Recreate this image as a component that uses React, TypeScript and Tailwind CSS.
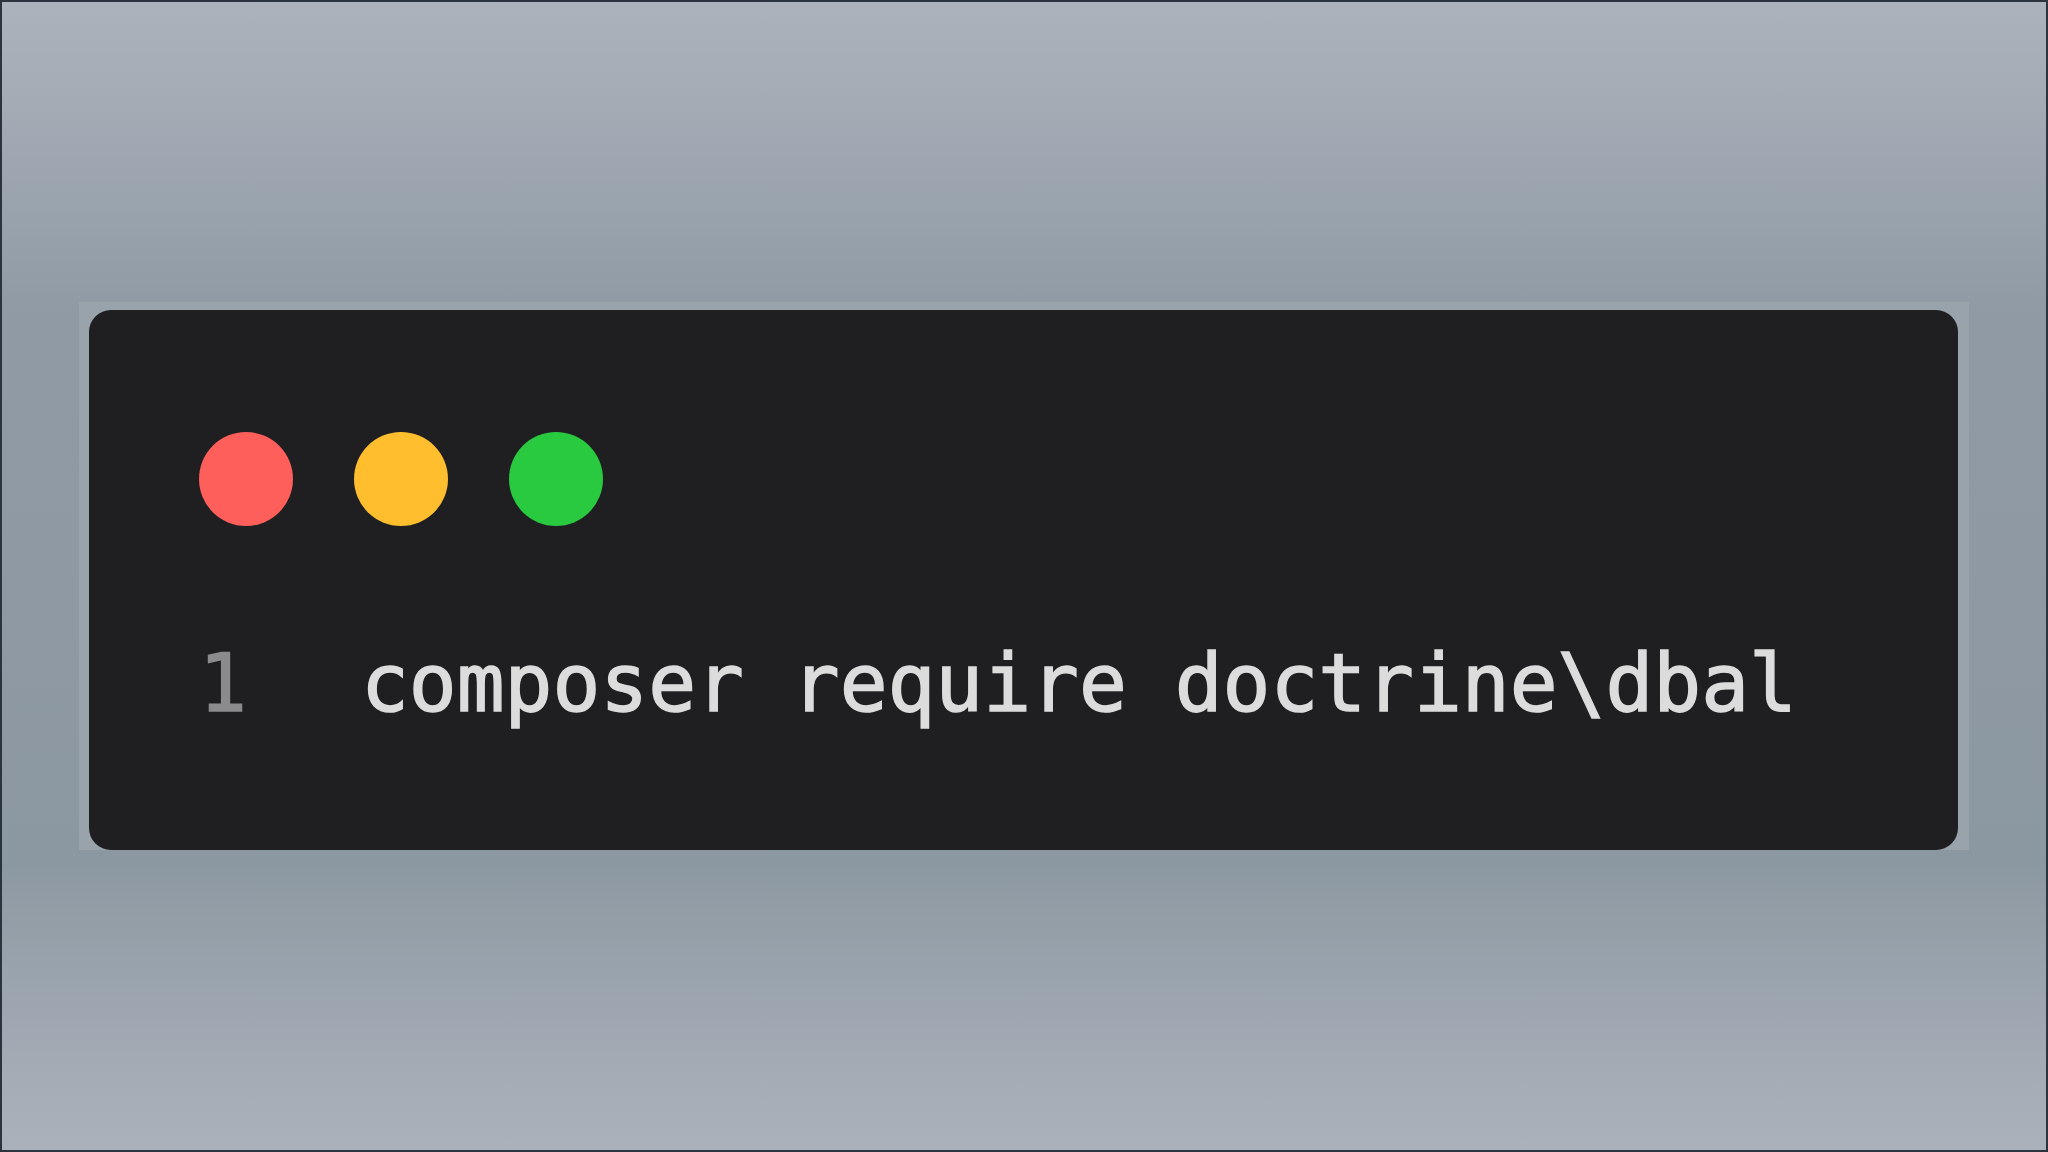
const mono = { fontFamily: '"DejaVu Sans Mono", "Liberation Mono", monospace' }

export default function App() {
  return (
    <div className="w-[2048px] h-[1152px] border-2 border-[#2a333e] bg-[linear-gradient(180deg,#abb2bc_0%,#9ea7b1_14%,#8f9aa4_27%,#8e99a3_50%,#8c98a1_75%,#9ea7b1_88%,#aab1bb_100%)] flex items-center justify-center">
      <div className="bg-[#98a3ac] pl-[10px] pt-[8px] pr-[11px]">
        <div className="w-[1869px] h-[540px] rounded-[22px] bg-[#1f1f21] pl-[110px] pt-[122px]">
          <div className="flex gap-[61px]">
            <div className="w-[94px] h-[94px] rounded-full bg-[#ff5f5a]" />
            <div className="w-[94px] h-[94px] rounded-full bg-[#ffbe2e]" />
            <div className="w-[94px] h-[94px] rounded-full bg-[#29c940]" />
          </div>
          <div className="flex mt-[118px] text-[79.5px] leading-[79px]" style={mono}>
            <span className="w-[162px] text-[#8b8b8d] [-webkit-text-stroke:1.5px_#8b8b8d]">1</span>
            <span className="text-[#dcdcdc] [-webkit-text-stroke:1.5px_#dcdcdc]">composer require doctrine\dbal</span>
          </div>
        </div>
      </div>
    </div>
  )
}
